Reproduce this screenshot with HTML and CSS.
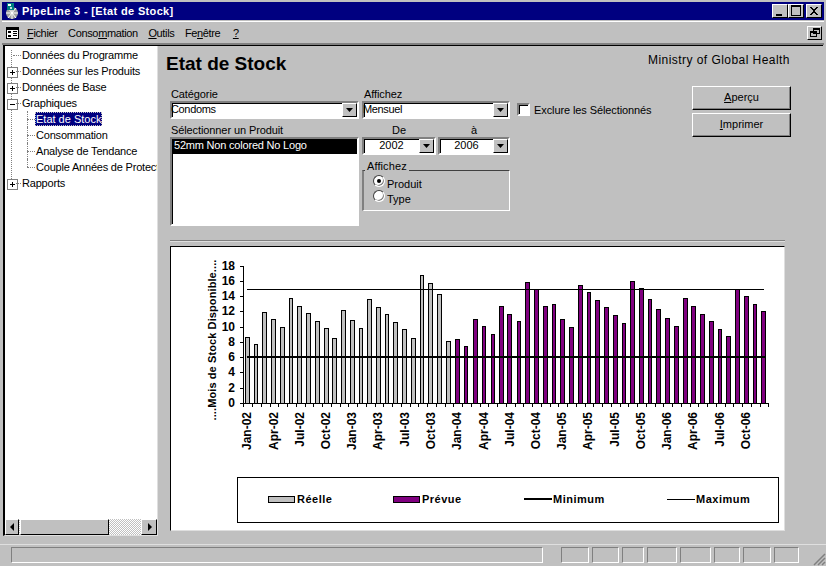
FILE: index.html
```html
<!DOCTYPE html>
<html lang="fr">
<head>
<meta charset="utf-8">
<title>PipeLine 3 - [Etat de Stock]</title>
<link rel="stylesheet" href="styles.css">
</head>
<body>
<div class="window">
  <header class="titlebar">
    <svg class="app-icon" width="17" height="16" viewBox="0 0 17 16"><circle cx="9" cy="10" r="6" fill="#a0a0a0"/><path d="M3 10h12M9 4v12M5 5l8 10M13 5 5 15" stroke="#fff" stroke-width="1"/><rect x="4" y="0" width="7" height="7" fill="#008080" shape-rendering="crispEdges"/><rect x="5" y="1" width="3" height="2" fill="#fff" shape-rendering="crispEdges"/><rect x="7" y="4" width="2" height="2" fill="#c0e0e0" shape-rendering="crispEdges"/></svg>
    <span class="title-text">PipeLine 3 - [Etat de Stock]</span>
    <div class="winbtns">
      <button class="winbtn"><svg width="14" height="12" viewBox="0 0 14 12" shape-rendering="crispEdges"><rect x="3" y="9" width="6" height="2"/></svg></button>
      <button class="winbtn"><svg width="14" height="12" viewBox="0 0 14 12" shape-rendering="crispEdges"><path d="M2 0h10v11H2zM3 2v8h8V2z" fill-rule="evenodd"/></svg></button>
      <button class="winbtn winbtn-close"><svg width="14" height="12" viewBox="0 0 14 12" shape-rendering="crispEdges"><path d="M3 2h2v1h1v1h2V3h1V2h2v1h-1v1H9v1H8v2h1v1h1v1h1v1H9V9H8V8H6v1H5v1H3V9h1V8h1V7h1V5H5V4H4V3H3z"/></svg></button>
    </div>
  </header>
  <nav class="menubar">
    <svg class="sys-icon" width="13" height="12" viewBox="0 0 13 12" shape-rendering="crispEdges"><path d="M.5.5h12v11H.5z" fill="#fff" stroke="#000"/><rect x="1" y="1" width="11" height="2"/><rect x="2" y="4" width="3" height="2"/><rect x="2" y="8" width="3" height="2"/><rect x="7" y="4" width="4" height="1"/><rect x="7" y="6" width="4" height="1"/><rect x="7" y="8" width="4" height="1"/></svg>
    <span class="menu-item"><u>F</u>ichier</span>
    <span class="menu-item">Conso<u>m</u>mation</span>
    <span class="menu-item"><u>O</u>utils</span>
    <span class="menu-item">Fe<u>n</u>être</span>
    <span class="menu-item menu-help"><u>?</u></span>
    <button class="restore"><svg width="10" height="9" viewBox="0 0 10 9" shape-rendering="crispEdges"><path d="M3.500 .5h6v5h-6zM3 1h6M.5 3.500h6v5h-6zM0 4h6" fill="none" stroke="#000"/></svg></button>
  </nav>
  <div class="main">
    <aside class="tree">
      <ul class="tree-list">
        <li class="tree-row"><span class="tree-node tree-leaf"></span><span>Données du Programme</span></li>
        <li class="tree-row"><span class="tree-node tree-plus"></span><span>Données sur les Produits</span></li>
        <li class="tree-row"><span class="tree-node tree-plus"></span><span>Données de Base</span></li>
        <li class="tree-row"><span class="tree-node tree-minus"></span><span>Graphiques</span></li>
        <li class="tree-row tree-child"><span class="tree-node tree-leaf"></span><span class="tree-selected">Etat de Stock</span></li>
        <li class="tree-row tree-child"><span class="tree-node tree-leaf"></span><span>Consommation</span></li>
        <li class="tree-row tree-child"><span class="tree-node tree-leaf"></span><span>Analyse de Tendance</span></li>
        <li class="tree-row tree-child tree-last"><span class="tree-node tree-leaf"></span><span>Couple Années de Protection</span></li>
        <li class="tree-row"><span class="tree-node tree-plus"></span><span>Rapports</span></li>
      </ul>
      <div class="hscroll">
        <button class="sbtn sbtn-left"><svg width="5" height="8" viewBox="0 0 5 8"><path d="M4 0v8L0 4z"/></svg></button>
        <div class="thumb"></div>
        <div class="track"></div>
        <button class="sbtn"><svg width="5" height="8" viewBox="0 0 5 8"><path d="M1 0v8l4-4z"/></svg></button>
      </div>
    </aside>
    <section class="content">
      <div class="head">
        <h1 class="page-title">Etat de Stock</h1>
        <div class="org">Ministry of Global Health</div>
      </div>
      <div class="form">
        <div class="col-left">
          <label class="lbl">Catégorie</label>
          <div class="combo"><span class="combo-text">Condoms</span><span class="drop"><svg width="7" height="4" viewBox="0 0 7 4"><path d="M0 0h7L3.500 4z"/></svg></span></div>
          <label class="lbl lbl-product">Sélectionner un Produit</label>
          <div class="listbox"><div class="list-sel">52mm Non colored No Logo</div></div>
        </div>
        <div class="col-mid">
          <label class="lbl">Affichez</label>
          <div class="combo"><span class="combo-text">Mensuel</span><span class="drop"><svg width="7" height="4" viewBox="0 0 7 4"><path d="M0 0h7L3.500 4z"/></svg></span></div>
          <div class="years">
            <div class="year year-from">
              <label class="lbl lbl-center">De</label>
              <div class="combo"><span class="combo-text center">2002</span><span class="drop"><svg width="7" height="4" viewBox="0 0 7 4"><path d="M0 0h7L3.500 4z"/></svg></span></div>
            </div>
            <div class="year year-to">
              <label class="lbl lbl-center">à</label>
              <div class="combo"><span class="combo-text center">2006</span><span class="drop"><svg width="7" height="4" viewBox="0 0 7 4"><path d="M0 0h7L3.500 4z"/></svg></span></div>
            </div>
          </div>
          <div class="group">
            <span class="group-title">Affichez</span>
            <div class="radio-row"><span class="radio radio-on"></span><span class="radio-label">Produit</span></div>
            <div class="radio-row"><span class="radio"></span><span class="radio-label">Type</span></div>
          </div>
        </div>
        <div class="col-check">
          <span class="check"></span><span class="check-label">Exclure les Sélectionnés</span>
        </div>
        <div class="col-btn">
          <button class="btn"><u>A</u>perçu</button>
          <button class="btn"><u>I</u>mprimer</button>
        </div>
      </div>
      <div class="rule"></div>
      <div class="chart-panel">
        <svg class="chart" width="613" height="283" viewBox="171 247 613 283" shape-rendering="crispEdges">
          <g class="bars-actual">
            <rect x="245.500" y="337.500" width="4" height="66"/><rect x="254.500" y="344.500" width="3" height="59"/><rect x="262.500" y="312.500" width="4" height="91"/><rect x="271.500" y="319.500" width="4" height="84"/><rect x="280.500" y="327.500" width="4" height="76"/><rect x="289.500" y="298.500" width="3" height="105"/><rect x="297.500" y="306.500" width="4" height="97"/><rect x="306.500" y="313.500" width="4" height="90"/><rect x="315.500" y="321.500" width="4" height="82"/><rect x="324.500" y="328.500" width="4" height="75"/><rect x="332.500" y="338.500" width="4" height="65"/><rect x="341.500" y="310.500" width="4" height="93"/><rect x="350.500" y="320.500" width="4" height="83"/><rect x="359.500" y="328.500" width="3" height="75"/><rect x="367.500" y="299.500" width="4" height="104"/><rect x="376.500" y="307.500" width="4" height="96"/><rect x="385.500" y="314.500" width="3" height="89"/><rect x="393.500" y="322.500" width="4" height="81"/><rect x="402.500" y="329.500" width="4" height="74"/><rect x="411.500" y="338.500" width="4" height="65"/><rect x="420.500" y="275.500" width="3" height="128"/><rect x="428.500" y="283.500" width="4" height="120"/><rect x="437.500" y="294.500" width="4" height="109"/><rect x="446.500" y="341.500" width="4" height="62"/>
          </g>
          <g class="bars-forecast">
            <rect x="455.500" y="339.500" width="4" height="64"/><rect x="464.500" y="346.500" width="3" height="57"/><rect x="473.500" y="319.500" width="4" height="84"/><rect x="482.500" y="326.500" width="3" height="77"/><rect x="491.500" y="334.500" width="3" height="69"/><rect x="499.500" y="306.500" width="4" height="97"/><rect x="507.500" y="314.500" width="4" height="89"/><rect x="517.500" y="321.500" width="3" height="82"/><rect x="525.500" y="282.500" width="4" height="121"/><rect x="534.500" y="289.500" width="4" height="114"/><rect x="543.500" y="306.500" width="4" height="97"/><rect x="552.500" y="304.500" width="3" height="99"/><rect x="560.500" y="319.500" width="4" height="84"/><rect x="569.500" y="327.500" width="4" height="76"/><rect x="578.500" y="285.500" width="4" height="118"/><rect x="587.500" y="292.500" width="3" height="111"/><rect x="595.500" y="300.500" width="4" height="103"/><rect x="604.500" y="307.500" width="4" height="96"/><rect x="613.500" y="315.500" width="4" height="88"/><rect x="622.500" y="323.500" width="3" height="80"/><rect x="630.500" y="281.500" width="4" height="122"/><rect x="639.500" y="288.500" width="4" height="115"/><rect x="648.500" y="299.500" width="3" height="104"/><rect x="656.500" y="309.500" width="4" height="94"/><rect x="665.500" y="318.500" width="4" height="85"/><rect x="674.500" y="326.500" width="4" height="77"/><rect x="683.500" y="298.500" width="4" height="105"/><rect x="691.500" y="306.500" width="4" height="97"/><rect x="700.500" y="314.500" width="4" height="89"/><rect x="709.500" y="321.500" width="4" height="82"/><rect x="718.500" y="329.500" width="3" height="74"/><rect x="726.500" y="336.500" width="4" height="67"/><rect x="735.500" y="289.500" width="4" height="114"/><rect x="744.500" y="296.500" width="4" height="107"/><rect x="753.500" y="304.500" width="3" height="99"/><rect x="761.500" y="311.500" width="4" height="92"/>
          </g>
          <line class="line-max" x1="247" y1="289.500" x2="764" y2="289.500"/>
          <line class="line-min" x1="247" y1="357" x2="766" y2="357"/>
          <path class="axis" d="M243.500 266v137.500M240 266.500h4M240 281.500h4M240 296.500h4M240 311.500h4M240 327.500h4M240 342.500h4M240 357.500h4M240 372.500h4M240 388.500h4M240 403.500h529M243.500 403v4M261.500 403v4M278.500 403v4M296.500 403v4M313.500 403v4M331.500 403v4M348.500 403v4M366.500 403v4M383.500 403v4M401.500 403v4M418.500 403v4M436.500 403v4M453.500 403v4M471.500 403v4M488.500 403v4M506.500 403v4M523.500 403v4M541.500 403v4M558.500 403v4M576.500 403v4M593.500 403v4M611.500 403v4M628.500 403v4M646.500 403v4M663.500 403v4M681.500 403v4M698.500 403v4M716.500 403v4M733.500 403v4M751.500 403v4M768.500 403v4M252.500 403v4M270.500 403v4M287.500 403v4M305.500 403v4M322.500 403v4M340.500 403v4M357.500 403v4M375.500 403v4M392.500 403v4M410.500 403v4M427.500 403v4M445.500 403v4M462.500 403v4M480.500 403v4M497.500 403v4M515.500 403v4M532.500 403v4M550.500 403v4M567.500 403v4M585.500 403v4M602.500 403v4M620.500 403v4M637.500 403v4M655.500 403v4M672.500 403v4M690.500 403v4M707.500 403v4M725.500 403v4M742.500 403v4M760.500 403v4"/>
          <g class="ylabels">
            <text x="235" y="270">18</text><text x="235" y="285">16</text><text x="235" y="300">14</text><text x="235" y="315">12</text><text x="235" y="331">10</text><text x="235" y="346">8</text><text x="235" y="361">6</text><text x="235" y="376">4</text><text x="235" y="392">2</text><text x="235" y="407">0</text>
          </g>
          <text class="ytitle" transform="translate(216 340) rotate(-90)">....Mois de Stock Disponible....</text>
          <g class="xlabels">
            <text transform="translate(251 412) rotate(-90)">Jan-02</text><text transform="translate(278 412) rotate(-90)">Apr-02</text><text transform="translate(304 412) rotate(-90)">Jul-02</text><text transform="translate(330 412) rotate(-90)">Oct-02</text><text transform="translate(356 412) rotate(-90)">Jan-03</text><text transform="translate(382 412) rotate(-90)">Apr-03</text><text transform="translate(409 412) rotate(-90)">Jul-03</text><text transform="translate(435 412) rotate(-90)">Oct-03</text><text transform="translate(461 412) rotate(-90)">Jan-04</text><text transform="translate(488 412) rotate(-90)">Apr-04</text><text transform="translate(514 412) rotate(-90)">Jul-04</text><text transform="translate(540 412) rotate(-90)">Oct-04</text><text transform="translate(566 412) rotate(-90)">Jan-05</text><text transform="translate(592 412) rotate(-90)">Apr-05</text><text transform="translate(619 412) rotate(-90)">Jul-05</text><text transform="translate(645 412) rotate(-90)">Oct-05</text><text transform="translate(671 412) rotate(-90)">Jan-06</text><text transform="translate(697 412) rotate(-90)">Apr-06</text><text transform="translate(724 412) rotate(-90)">Jul-06</text><text transform="translate(750 412) rotate(-90)">Oct-06</text>
          </g>
          <rect class="legend-box" x="237.500" y="477.500" width="541" height="45"/>
          <rect class="swatch-actual" x="268.500" y="496.500" width="26" height="6"/>
          <text class="legend-text" x="297" y="503">Réelle</text>
          <rect class="swatch-forecast" x="393.500" y="496.500" width="26" height="6"/>
          <text class="legend-text" x="422" y="503">Prévue</text>
          <line class="line-min" x1="524" y1="499" x2="552" y2="499"/>
          <text class="legend-text" x="553" y="503">Minimum</text>
          <line class="line-max" x1="667" y1="499.500" x2="695" y2="499.500"/>
          <text class="legend-text" x="696" y="503">Maximum</text>
        </svg>
      </div>
    </section>
  </div>
  <footer class="statusbar">
    <div class="pane pane-main"></div>
    <div class="pane p28"></div><div class="pane p27"></div><div class="pane p22"></div><div class="pane p30"></div><div class="pane p31"></div><div class="pane p26"></div><div class="pane p28"></div><div class="pane p25"></div>
    <svg class="grip" width="13" height="13" viewBox="0 0 13 13"><path d="M12 1 1 12M12 5 5 12M12 9 9 12" stroke="#808080" stroke-width="1.500" fill="none"/></svg>
  </footer>
</div>
</body>
</html>
```
FILE: styles.css
```css
* { box-sizing: border-box; }
html, body { margin: 0; padding: 0; }
body { width: 826px; height: 566px; overflow: hidden; background: #c0c0c0; font: 11px "Liberation Sans", Arial, sans-serif; color: #000; }
button { font: inherit; color: inherit; padding: 0; margin: 0; }
u { text-underline-offset: 1px; }

.window { width: 826px; height: 566px; display: flex; flex-direction: column; background: #c0c0c0; padding-top: 2px; }

.titlebar { height: 18px; flex: none; margin: 0 2px; background: #000080; color: #fff; display: flex; align-items: center; padding: 0 2px 0 1px; }
.app-icon { flex: none; margin-right: 2px; }
.title-text { font-weight: bold; font-size: 11px; letter-spacing: .35px; flex: 1; }
.winbtns { display: flex; align-items: center; }
.winbtn { width: 16px; height: 14px; background: #c0c0c0; border: 1px solid; border-color: #fff #000 #000 #fff; display: flex; align-items: center; justify-content: center; }
.winbtn-close { margin-left: 2px; }
.winbtn svg { display: block; }

.menubar { height: 24px; flex: none; margin: 1px 2px 0; border-top: 1px solid #fff; display: flex; align-items: center; padding-left: 4px; border-bottom: 2px solid #808080; }
.sys-icon { margin-right: 8px; flex: none; }
.menu-item { margin-right: 10.500px; letter-spacing: -.35px; }
.menu-help { margin-left: 2px; }
.restore { margin-left: auto; margin-right: 2px; width: 15px; height: 14px; background: #c0c0c0; border: 1px solid; border-color: #fff #000 #000 #fff; display: flex; align-items: center; justify-content: center; }

.main { flex: 1; display: flex; min-height: 0; border-top: 1px solid #000; margin-left: 3px; margin-right: 3px; }

.tree { width: 155px; height: 490px; flex: none; background: #fff; border-left: 2px solid #000; border-right: 1px solid #dfdfdf; border-bottom: 1px solid #dfdfdf; display: flex; flex-direction: column; overflow: hidden; }
.tree-list { list-style: none; margin: 0; padding: 1px 0 0 0; flex: 1; overflow: hidden; min-height: 0; white-space: nowrap; letter-spacing: -.2px; position: relative; }
.tree-list::before { content: ""; position: absolute; left: 6px; top: 4px; height: 129px; border-left: 1px dotted #808080; }
.tree-row { height: 16px; display: flex; align-items: center; position: relative; }
.tree-child { padding-left: 14px; }
.tree-child::before { content: ""; position: absolute; left: 22px; top: 0; height: 16px; border-left: 1px dotted #808080; }
.tree-last::before { height: 8px; }
.tree-node { width: 17px; height: 16px; flex: none; position: relative; display: block; }
.tree-leaf::before { content: ""; position: absolute; left: 8px; right: 1px; top: 8px; border-top: 1px dotted #808080; }
.tree-plus::before, .tree-minus::before { content: ""; position: absolute; left: 2px; top: 4px; width: 9px; height: 9px; border: 1px solid #808080; background-color: #fff; background-repeat: no-repeat; background-position: center; }
.tree-plus::before { background-image: linear-gradient(#000, #000), linear-gradient(#000, #000); background-size: 5px 1px, 1px 5px; }
.tree-minus::before { background-image: linear-gradient(#000, #000); background-size: 5px 1px; }
.tree-plus::after, .tree-minus::after { content: ""; position: absolute; left: 11px; right: 1px; top: 8px; border-top: 1px dotted #808080; }
.tree-selected { background: #000080; color: #fff; outline: 1px dotted #c0c0c0; outline-offset: -1px; padding: 0 1px; margin-left: -1px; line-height: 14px; letter-spacing: 0; }

.hscroll { height: 16px; flex: none; display: flex; background-image: repeating-conic-gradient(#c0c0c0 0 25%, #fff 0 50%); background-size: 2px 2px; }
.sbtn, .thumb { background: #c0c0c0; border: 1px solid; border-color: #fff #000 #000 #fff; height: 16px; }
.sbtn { width: 16px; display: flex; align-items: center; justify-content: center; }
.sbtn-left { width: 14px; margin-right: 1px; }
.thumb { width: 89px; }
.track { flex: 1; }

.content { flex: 1; min-width: 0; padding-left: 8px; display: flex; flex-direction: column; }
.head { display: flex; justify-content: space-between; height: 35px; }
.page-title { margin: 7px 0 0; font-size: 19px; line-height: 22px; font-weight: bold; }
.org { font-size: 12px; letter-spacing: .45px; margin: 6px 33px 0 0; line-height: 16px; }

.form { display: flex; height: 159px; padding-left: 4px; }
.lbl { display: block; height: 13px; line-height: 13px; padding-left: 1px; letter-spacing: -.1px; }
.col-left { width: 189px; margin-right: 4px; padding-top: 7px; flex: none; }
.lbl-product { margin-top: 5px; }
.combo { height: 18px; background: #fff; border: 2px solid; border-color: #808080 #fff #fff #808080; box-shadow: inset 1px 1px 0 #000; display: flex; align-items: center; }
.combo-text { flex: 1; min-width: 0; margin-left: -1px; letter-spacing: -.35px; line-height: 12px; height: 14px; }
.combo-text.center { text-align: center; letter-spacing: 0; margin-left: 0; }
.drop { width: 15px; height: 14px; flex: none; background: #c0c0c0; border: 1px solid; border-color: #fff #000 #000 #fff; display: flex; align-items: center; justify-content: center; }
.drop svg { display: block; }
.listbox { width: 189px; height: 89px; background: #fff; border: 2px solid; border-color: #808080 #fff #fff #808080; box-shadow: inset 1px 1px 0 #000; }
.list-sel { background: #000; color: #fff; height: 15px; line-height: 13px; padding-left: 2px; letter-spacing: -.2px; }

.col-mid { width: 148px; padding-top: 7px; flex: none; margin-left: -1px; }
.col-mid > .lbl { padding-left: 2px; }
.years { display: flex; gap: 2px; margin-top: 5px; }
.year-from { width: 74px; }
.year-to { width: 72px; }
.lbl-center { text-align: center; padding: 0; }
.group { margin-top: 15px; padding: 5px 0 0 9px; width: 148px; height: 41px; border: 1px solid; border-color: #404040 #fff #fff #808080; border-left-width: 2px; position: relative; }
.group-title { position: absolute; left: 1px; top: -11px; padding: 0 2px; background: #c0c0c0; line-height: 13px; letter-spacing: .1px; }
.radio-row { display: flex; align-items: center; height: 15px; }
.radio { width: 12px; height: 12px; border-radius: 50%; background: #fff; border: 1px solid; border-color: #404040 #fff #fff #404040; box-shadow: inset -1px -1px 0 #808080; flex: none; margin-right: 2px; position: relative; top: -3px; }
.radio-on::after { content: ""; position: absolute; left: 3px; top: 3px; width: 4px; height: 4px; border-radius: 50%; background: #000; }

.col-check { display: flex; align-items: center; height: 13px; margin: 22px 0 0 7px; }
.check { width: 13px; height: 13px; background: #fff; border: 2px solid; border-color: #808080 #fff #fff #808080; box-shadow: inset 1px 1px 0 #000; margin-right: 4px; flex: none; }
.check-label { letter-spacing: -.1px; white-space: nowrap; }
.col-btn { margin-left: auto; margin-right: 32px; margin-top: 5px; display: flex; flex-direction: column; gap: 3px; }
.btn { width: 99px; height: 24px; padding-bottom: 2px; background: #c0c0c0; border: 1px solid; border-color: #fff #000 #000 #fff; box-shadow: inset -1px -1px 0 #808080; }

.rule { width: 615px; height: 2px; border-top: 1px solid #808080; border-bottom: 1px solid #dfdfdf; margin: 0 0 4px 4px; flex: none; }
.chart-panel { width: 615px; height: 285px; margin-left: 4px; background: #fff; border: 1px solid; border-color: #000 #dfdfdf #dfdfdf #000; flex: none; }
.chart { display: block; font-weight: bold; font-size: 11px; }
.bars-actual rect, .swatch-actual { fill: #c0c0c0; stroke: #000; }
.bars-forecast rect, .swatch-forecast { fill: #800080; stroke: #000; }
.line-max { stroke: #000; stroke-width: 1; }
.line-min { stroke: #000; stroke-width: 2; }
.axis { stroke: #000; fill: none; }
.ylabels { text-anchor: end; font-size: 12px; }
.xlabels { text-anchor: end; font-size: 12px; }
.ytitle { text-anchor: middle; font-size: 11px; letter-spacing: .1px; }
.legend-box { fill: #fff; stroke: #000; }
.legend-text { font-size: 11px; letter-spacing: .5px; }

.statusbar { height: 22px; flex: none; display: flex; align-items: flex-end; gap: 3px; padding: 0 0 3px 11px; position: relative; border-top: 1px solid #dfdfdf; }
.pane { height: 16px; border: 1px solid; border-color: #808080 #fff #fff #808080; flex: none; }
.pane-main { width: 532px; margin-right: 15px; }
.p22 { width: 22px; } .p25 { width: 25px; } .p26 { width: 26px; } .p27 { width: 27px; } .p28 { width: 28px; } .p30 { width: 30px; } .p31 { width: 31px; }
.grip { position: absolute; right: 0; bottom: 0; }
```
